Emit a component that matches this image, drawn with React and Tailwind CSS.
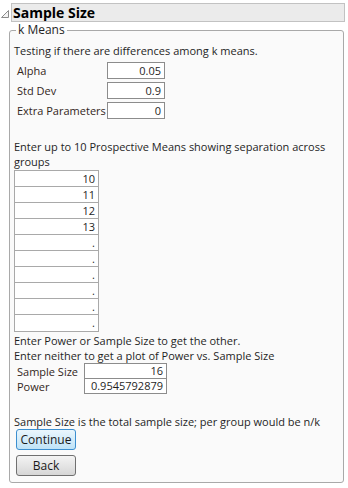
import React from 'react';

const means = ['10', '11', '12', '13', '.', '.', '.', '.', '.', '.'];

const params = [
    { label: 'Alpha', value: '0.05' },
    { label: 'Std Dev', value: '0.9' },
    { label: 'Extra Parameters', value: '0' },
];

const Disclosure = () => (
    <svg width="11" height="10" viewBox="0 0 11 10" className="shrink-0 mt-[6px]">
        <path d="M8.5 1.5 L8.5 8.5 L1.5 8.5 Z" fill="#f4f4f4" stroke="#8a8a8a" strokeWidth="1" />
    </svg>
);

const ParamRow = ({ label, value }) => (
    <div className="flex items-center h-5 pl-[3px]">
        <span className="w-[90px] whitespace-nowrap text-[#33261a]">{label}</span>
        <div className="w-[58px] h-[17px] border border-[#8c8c8c] bg-white text-right pr-[3px] leading-[15px]">
            {value}
        </div>
    </div>
);

const Button = ({ children, primary }) => (
    <button
        type="button"
        className={
            primary
                ? 'w-[60px] h-[21px] rounded-[3px] border border-[#3c8fd0] bg-gradient-to-b from-[#eaf6fd] to-[#bfe3f7] text-[12px] text-[#1a1a1a] leading-[19px]'
                : 'w-[60px] h-[21px] rounded-[3px] border border-[#707070] bg-gradient-to-b from-[#f4f4f4] to-[#d6d6d6] text-[12px] text-[#1a1a1a] leading-[19px]'
        }
    >
        {children}
    </button>
);

export default function App() {
    return (
        <div className="w-[348px] h-[488px] bg-white text-[11px] leading-[15px] text-[#1f1f1f]" style={{ fontFamily: '"Open Sans", "Noto Sans", sans-serif' }}>
            <div className="flex pt-[3px]">
                <Disclosure />
                <div className="w-[334px] h-[19px] border border-[#c2c2c2] bg-[#ebebeb] pl-[1px] font-bold text-[14px] leading-[17px] text-black">
                    Sample Size
                </div>
            </div>

            <fieldset className="ml-[9px] mt-[1px] w-[335px] h-[460px] border border-[#a9a9a9] rounded-[3px] bg-[#fafafa] px-[4px]">
                <legend className="ml-[2px] px-[2px] leading-[14px] text-[12px]">k Means</legend>

                <div className="pt-[6px]">Testing if there are differences among k means.</div>

                <div className="mt-[2px]">
                    {params.map((p) => (
                        <ParamRow key={p.label} {...p} />
                    ))}
                </div>

                <div className="mt-[19px] whitespace-nowrap">
                    Enter up to 10 Prospective Means showing separation across
                </div>
                <div>groups</div>

                <div className="w-[85px] mt-[1px] border border-[#a9a9a9] bg-white">
                    {means.map((m, i) => (
                        <div
                            key={i}
                            className={`h-[16px] text-right pr-[3px] leading-[15px] ${i < means.length - 1 ? 'border-b border-[#a9a9a9]' : 'h-[15px]'}`}
                        >
                            {m}
                        </div>
                    ))}
                </div>

                <div className="mt-[1px]">Enter Power or Sample Size to get the other.</div>
                <div>Enter neither to get a plot of Power vs. Sample Size</div>

                <div className="flex pl-[3px]">
                    <div className="w-[67px] text-[#33261a]">
                        <div className="h-[15px] mt-[1px]">Sample Size</div>
                        <div className="h-[15px]">Power</div>
                    </div>
                    <div className="w-[83px] border border-[#8c8c8c] bg-white">
                        <div className="h-[15px] border-b border-[#8c8c8c] text-right pr-[3px] leading-[14px]">16</div>
                        <div className="h-[14px] text-right pr-[3px] leading-[14px]">0.9545792879</div>
                    </div>
                </div>

                <div className="mt-[20px]">Sample Size is the total sample size; per group would be n/k</div>

                <div className="flex flex-col gap-[5px] pl-[2px]">
                    <Button primary>Continue</Button>
                    <Button>Back</Button>
                </div>
            </fieldset>
        </div>
    );
}
